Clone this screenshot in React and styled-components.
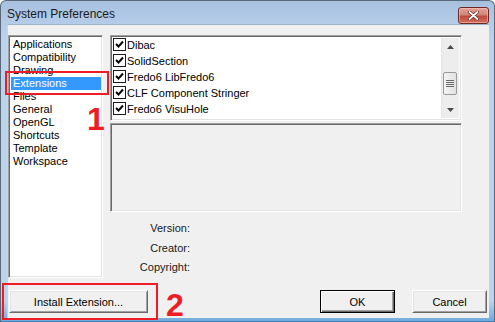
import React from "react";
import styled, { createGlobalStyle } from "styled-components";

const Global = createGlobalStyle`
  html, body { margin: 0; padding: 0; background: #ffffff; }
  body { width: 495px; height: 322px; overflow: hidden; }
`;

const Window = styled.div`
  position: relative;
  width: 495px;
  height: 322px;
  box-sizing: border-box;
  border: 1px solid #59697a;
  border-bottom-color: #3f7fb8;
  border-radius: 6px 6px 0 0;
  background: linear-gradient(#a6c0de 0px, #b3cbe7 20px, #bcd3ec 40px, #bcd3ec 300px, #6aa6da 322px);
  display: flex;
  flex-direction: column;
  font-family: "Liberation Sans", Arial, sans-serif;
  font-size: 11px;
  color: #000;
`;

const TitleBar = styled.div`
  height: 23px;
  display: flex;
  align-items: center;
  justify-content: space-between;
  padding: 0 5px 0 6px;
`;

const Title = styled.div`
  font-family: "Liberation Sans", Arial, sans-serif;
  font-size: 12px;
  color: #1a1a1a;
  margin-top: 2px;
`;

const CloseButton = styled.div`
  width: 29px;
  height: 15px;
  margin-top: 5px;
  border: 1px solid #6d2a25;
  border-radius: 3px;
  background: linear-gradient(#e4a297 0%, #d1867a 45%, #c04b3c 55%, #d0705e 100%);
  box-shadow: inset 0 0 0 1px rgba(255, 210, 200, 0.5);
  display: flex;
  align-items: center;
  justify-content: center;
`;

const Client = styled.div`
  position: relative;
  flex: 1;
  margin: 0 5px 3px 6px;
  background: #f0f0f0;
  border-top: 1px solid #9fb3cb;
  border-left: 1px solid #c7d5e5;
  display: flex;
  flex-direction: column;
  padding: 10px 0 0 0;
`;

const TopRow = styled.div`
  display: flex;
  gap: 7px;
  height: 243px;
`;

const Sunken = styled.div`
  box-sizing: border-box;
  border-style: solid;
  border-width: 1px;
  border-color: #a0a0a0 #ffffff #ffffff #a0a0a0;
  box-shadow: inset 1px 1px 0 #696969, inset -1px -1px 0 #e3e3e3;
`;

const CategoryList = styled(Sunken)`
  width: 95px;
  height: 243px;
  background: #fff;
  padding: 2px 1px 0 2px;
`;

const Category = styled.div`
  height: 13px;
  line-height: 13px;
  padding-left: 2px;
  white-space: nowrap;
  background: ${(p) => (p.$selected ? "#3399ff" : "transparent")};
  color: ${(p) => (p.$selected ? "#fff" : "#000")};
`;

const RightColumn = styled.div`
  width: 352px;
  display: flex;
  flex-direction: column;
  gap: 2px;
`;

const CheckList = styled(Sunken)`
  height: 86px;
  background: #fff;
  display: flex;
`;

const CheckItems = styled.div`
  flex: 1;
  padding: 2px 0 0 2px;
  display: flex;
  flex-direction: column;
  gap: 3px;
`;

const CheckItem = styled.div`
  display: flex;
  align-items: center;
  height: 13px;
  gap: 1px;
  white-space: nowrap;
`;

const Box = styled.div`
  width: 13px;
  height: 13px;
  box-sizing: border-box;
  border: 1px solid #1c1c1c;
  background: #fff;
  display: flex;
  align-items: center;
  justify-content: center;
`;

const ScrollBar = styled.div`
  width: 17px;
  margin: 2px 2px 2px 0;
  background: #ededed;
  border-left: 1px solid #e6e6e6;
  display: flex;
  flex-direction: column;
  align-items: center;
`;

const Arrow = styled.div`
  height: 17px;
  width: 15px;
  display: flex;
  align-items: center;
  justify-content: center;
`;

const Track = styled.div`
  flex: 1;
  width: 15px;
  display: flex;
  flex-direction: column;
  padding-top: 17px;
`;

const Thumb = styled.div`
  height: 23px;
  width: 14px;
  box-sizing: border-box;
  border: 1px solid #9a9a9a;
  border-radius: 2px;
  background: linear-gradient(90deg, #f4f4f4, #e2e2e2);
  display: flex;
  align-items: center;
  justify-content: center;
`;

const DetailPanel = styled(Sunken)`
  height: 89px;
  background: #f0f0f0;
`;

const InfoList = styled.div`
  display: grid;
  grid-template-columns: 80px 1fr;
  grid-auto-rows: 19.5px;
  padding-top: 5px;
`;

const InfoLabel = styled.div`
  text-align: right;
  line-height: 19px;
  color: #1a1a1a;
`;

const ButtonRow = styled.div`
  display: flex;
  align-items: center;
  margin-top: 12px;
  padding-left: 1px;
  padding-right: 2px;
`;

const Spacer = styled.div`
  flex: 1;
`;

const Button = styled.button`
  box-sizing: border-box;
  width: ${(p) => p.$w}px;
  height: 23px;
  margin-left: ${(p) => p.$ml || 0}px;
  font-family: "Liberation Sans", Arial, sans-serif;
  font-size: 11px;
  color: #000;
  background: #f0f0f0;
  padding: 0;
  border-style: solid;
  border-width: 1px;
  border-color: ${(p) =>
    p.$default ? "#000 #000 #000 #000" : "#ffffff #696969 #696969 #ffffff"};
  box-shadow: ${(p) =>
    p.$default
      ? "inset 1px 1px 0 #fff, inset -1px -1px 0 #696969, inset -2px -2px 0 #a0a0a0"
      : "inset 1px 1px 0 #e3e3e3, inset -1px -1px 0 #a0a0a0"};
`;

const RedBox = styled.div`
  position: absolute;
  box-sizing: border-box;
  border: 2px solid #ee1c24;
`;

const RedNumber = styled.div`
  position: absolute;
  font-family: "Liberation Sans", Arial, sans-serif;
  font-weight: bold;
  font-size: 32px;
  line-height: 32px;
  color: #ee1c24;
`;

const categories = [
  "Applications",
  "Compatibility",
  "Drawing",
  "Extensions",
  "Files",
  "General",
  "OpenGL",
  "Shortcuts",
  "Template",
  "Workspace",
];

const extensions = [
  "Dibac",
  "SolidSection",
  "Fredo6 LibFredo6",
  "CLF Component Stringer",
  "Fredo6 VisuHole",
];

const Check = () => (
  <svg width="9" height="9" viewBox="0 0 9 9">
    <path d="M1 4 L3.5 6.5 L8 1.5" fill="none" stroke="#000" strokeWidth="1.9" />
  </svg>
);

export default function App() {
  return (
    <>
      <Global />
      <Window>
        <TitleBar>
          <Title>System Preferences</Title>
          <CloseButton>
            <svg width="11" height="9" viewBox="0 0 11 9">
              <path d="M1.5 1 L9.5 8 M9.5 1 L1.5 8" stroke="#5a1c16" strokeWidth="3.2" strokeLinecap="round" />
              <path d="M1.5 1 L9.5 8 M9.5 1 L1.5 8" stroke="#ffffff" strokeWidth="1.8" strokeLinecap="round" />
            </svg>
          </CloseButton>
        </TitleBar>
        <Client>
          <TopRow>
            <CategoryList>
              {categories.map((c) => (
                <Category key={c} $selected={c === "Extensions"}>
                  {c}
                </Category>
              ))}
            </CategoryList>
            <RightColumn>
              <CheckList>
                <CheckItems>
                  {extensions.map((e) => (
                    <CheckItem key={e}>
                      <Box>
                        <Check />
                      </Box>
                      <span>{e}</span>
                    </CheckItem>
                  ))}
                </CheckItems>
                <ScrollBar>
                  <Arrow>
                    <svg width="7" height="4" viewBox="0 0 7 4">
                      <path d="M0 4 L3.5 0 L7 4 Z" fill="#4a4a4a" />
                    </svg>
                  </Arrow>
                  <Track>
                    <Thumb>
                      <svg width="8" height="7" viewBox="0 0 8 7">
                        <path d="M0 0.5 H8 M0 2.5 H8 M0 4.5 H8 M0 6.5 H8" stroke="#6b6b6b" strokeWidth="1" />
                      </svg>
                    </Thumb>
                  </Track>
                  <Arrow>
                    <svg width="7" height="4" viewBox="0 0 7 4">
                      <path d="M0 0 L7 0 L3.5 4 Z" fill="#4a4a4a" />
                    </svg>
                  </Arrow>
                </ScrollBar>
              </CheckList>
              <DetailPanel />
              <InfoList>
                <InfoLabel>Version:</InfoLabel>
                <div />
                <InfoLabel>Creator:</InfoLabel>
                <div />
                <InfoLabel>Copyright:</InfoLabel>
                <div />
              </InfoList>
            </RightColumn>
          </TopRow>
          <ButtonRow>
            <Button $w={139}>Install Extension...</Button>
            <Spacer />
            <Button $w={75} $default>OK</Button>
            <Button $w={75} $ml={17}>Cancel</Button>
          </ButtonRow>
          <RedBox style={{ left: -6, top: 258, width: 156, height: 37 }} />
          <RedNumber style={{ left: 158, top: 264 }}>2</RedNumber>
          <RedBox style={{ left: -3, top: 46, width: 104, height: 24 }} />
          <RedNumber style={{ left: 79, top: 78 }}>1</RedNumber>
        </Client>
      </Window>
    </>
  );
}
